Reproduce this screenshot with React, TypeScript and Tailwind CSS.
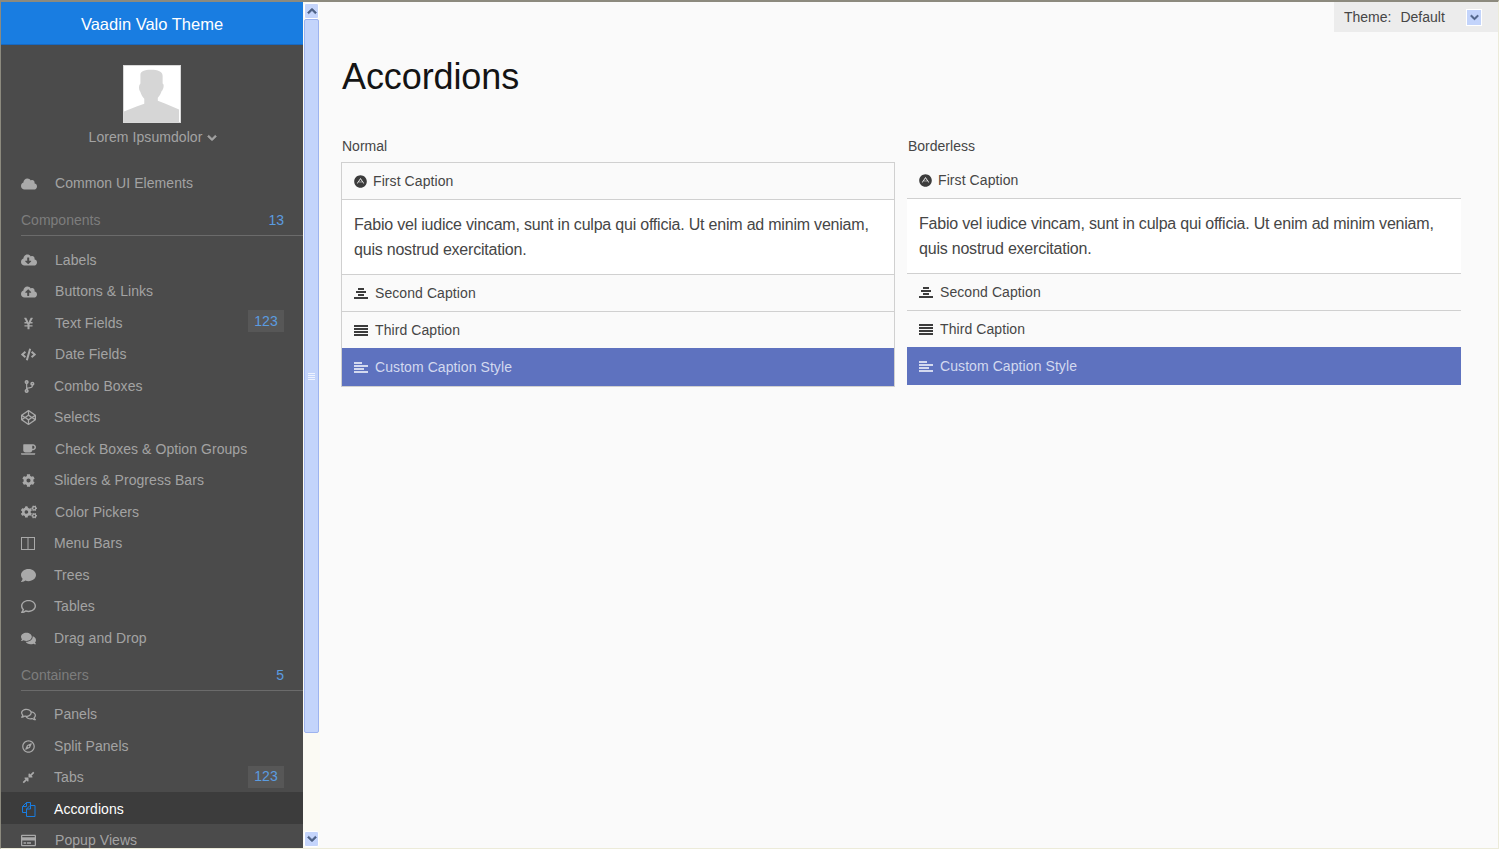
import type { ReactNode } from 'react';
import {
  FaAdn, FaChevronDown, FaChevronUp, FaCloud,
  FaCloudDownloadAlt, FaCloudUploadAlt, FaCode, FaCodeBranch, FaCodepen, FaCoffee, FaCog, FaCogs,
  FaComment, FaComments, FaCompressAlt, FaRegComment, FaRegComments, FaRegCompass,
  FaRegCreditCard, FaYenSign,
} from 'react-icons/fa';

type NavItem = { label: string; icon: ReactNode; iconBox: string; badge?: string; active?: boolean };

const wide = 'w-[34px]';
const narrow = 'w-[33px]';

// fa-columns from the old icon set: plain outline with a centre bar
function ColumnsIcon() {
  return (
    <svg width="14" height="13" viewBox="0 0 14 13" fill="none" stroke="currentColor">
      <rect x="0.5" y="0.5" width="13" height="12" />
      <path d="M7 0.5v12" />
    </svg>
  );
}

// fa-files-o: back sheet top left, front sheet bottom right
function FilesIcon() {
  return (
    <svg width="15" height="16" viewBox="0 0 15 16" fill="none" stroke="currentColor">
      <path d="M9.5 4.5V1.5h-4l-4 4v6h4" />
      <path d="M5.5 1.5v4h-4" />
      <path d="M14 4.5h-5l-3.5 3.5v7.5H14z" />
      <path d="M9.5 4.5V8H5.5" />
    </svg>
  );
}

function BarsIcon({ bars, center }: { bars: number[]; center?: boolean }) {
  return (
    <svg width="14" height="11" viewBox="0 0 14 11" fill="currentColor">
      {bars.map((w, i) => <rect key={i} x={center ? (14 - w) / 2 : 0} y={i * 3} width={w} height="2" />)}
    </svg>
  );
}

const components: NavItem[] = [
  { label: 'Labels', icon: <FaCloudDownloadAlt size={16} />, iconBox: wide },
  { label: 'Buttons & Links', icon: <FaCloudUploadAlt size={16} />, iconBox: wide },
  { label: 'Text Fields', icon: <FaYenSign size={13} className="ml-[1px]" />, iconBox: wide, badge: '-translate-y-[2px]' },
  { label: 'Date Fields', icon: <FaCode size={15} />, iconBox: wide },
  { label: 'Combo Boxes', icon: <FaCodeBranch size={13} className="ml-[2px]" />, iconBox: narrow },
  { label: 'Selects', icon: <FaCodepen size={15} />, iconBox: narrow },
  { label: 'Check Boxes & Option Groups', icon: <FaCoffee size={15} />, iconBox: wide },
  { label: 'Sliders & Progress Bars', icon: <FaCog size={13} className="ml-[1px]" />, iconBox: narrow },
  { label: 'Color Pickers', icon: <FaCogs size={16} />, iconBox: wide },
  { label: 'Menu Bars', icon: <ColumnsIcon />, iconBox: narrow },
  { label: 'Trees', icon: <FaComment size={15} />, iconBox: narrow },
  { label: 'Tables', icon: <FaRegComment size={15} />, iconBox: narrow },
  { label: 'Drag and Drop', icon: <FaComments size={15} />, iconBox: narrow },
];

const containers: NavItem[] = [
  { label: 'Panels', icon: <FaRegComments size={15} />, iconBox: narrow },
  { label: 'Split Panels', icon: <FaRegCompass size={13} className="ml-[1px]" />, iconBox: narrow },
  { label: 'Tabs', icon: <FaCompressAlt size={13} className="ml-[1px]" />, iconBox: narrow, badge: '-translate-y-[1px]' },
  { label: 'Accordions', icon: <FilesIcon />, iconBox: narrow, active: true },
  { label: 'Popup Views', icon: <FaRegCreditCard size={15} />, iconBox: wide },
];

function NavRow({ item }: { item: NavItem }) {
  const shape = item.active
    ? '-mt-[1.5px] mb-[1px] h-[32px] bg-[#3c3c3c] pt-[2.5px] text-white'
    : 'h-[31.5px] text-[#a3a3a3]';
  return (
    <div className={`flex shrink-0 items-center pl-[20px] pr-[19px] text-[14px] tracking-[0.06px] ${shape}`}>
      <span className={`flex shrink-0 items-center ${item.iconBox} ${item.active ? 'text-[#197de1]' : 'text-[#a9a9a9]'}`}>{item.icon}</span>
      <span className="flex-1">{item.label}</span>
      {item.badge && <span className={`flex h-[22px] w-[36px] items-center justify-center bg-[#575757] text-[#5b9ce0] ${item.badge}`}>123</span>}
    </div>
  );
}

function SectionTitle({ label, count, spacing }: { label: string; count: string; spacing: string }) {
  return (
    <div className={`ml-[20px] flex shrink-0 items-end border-b border-[#6b6b6b] pb-[5px] pr-[19px] text-[14px] leading-[20px] ${spacing}`}>
      <span className="flex-1 text-[#7d7d7d]">{label}</span>
      <span className="text-[#5b9ce0]">{count}</span>
    </div>
  );
}

function Sidebar() {
  return (
    <aside className="flex h-full w-[302px] shrink-0 flex-col overflow-hidden bg-[#4b4b4b]">
      <div className="flex h-[43px] shrink-0 items-center justify-center border-b border-[#1769c2] bg-[#197de1] pt-[3px] text-[16.5px] text-white">
        Vaadin Valo Theme
      </div>
      <div className="flex shrink-0 flex-col items-center pt-[20px]">
        <svg width="58" height="58" viewBox="0 0 58 58" className="border border-[#d9d9d9] bg-white">
          <path fill="#d6d6d6" d="M17 9c0-3 4-5 11-5s12 2 12 6v8c2 1 1 6-1 8-1 3-2 5-4 7v3l8 3 14 6v13H0V47l13-5 8-3v-5c-2-2-3-4-4-7-2-3-2-7 0-9z" />
        </svg>
        <div className="mt-[4px] flex h-[20px] items-center gap-[5px] pl-[2px] text-[14px] tracking-[0.06px] text-[#a3a3a3]">
          Lorem Ipsumdolor <FaChevronDown size={10} stroke="currentColor" strokeWidth={40} className="mt-[2px]" />
        </div>
      </div>
      <div className="mt-[21px] flex min-h-0 flex-1 flex-col">
        <NavRow item={{ label: 'Common UI Elements', icon: <FaCloud size={16} />, iconBox: wide }} />
        <SectionTitle label="Components" count="13" spacing="h-[36px] mb-[9px]" />
        {components.map(item => <NavRow key={item.label} item={item} />)}
        <SectionTitle label="Containers" count="5" spacing="h-[37px] mb-[8px]" />
        {containers.map(item => <NavRow key={item.label} item={item} />)}
      </div>
    </aside>
  );
}

function ScrollButton({ children }: { children: ReactNode }) {
  return (
    <div className="flex h-[16px] w-[15px] shrink-0 items-center justify-center rounded-[2px] border border-white bg-[#c5d5fb] text-[#4d6185]">
      {children}
    </div>
  );
}

function Scrollbar() {
  return (
    <div className="flex h-full w-[17px] shrink-0 flex-col items-center bg-[#fbfaf4] py-[1px]">
      <ScrollButton><FaChevronUp size={10} stroke="currentColor" strokeWidth={40} /></ScrollButton>
      <div className="flex h-[714px] w-[15px] shrink-0 items-center justify-center rounded-[2px] border border-[#9db3ef] bg-[#c3d4fb]">
        <div className="flex w-[7px] flex-col gap-[1px]">
          <div className="h-px bg-[#eef3ff]" /><div className="h-px bg-[#eef3ff]" /><div className="h-px bg-[#eef3ff]" /><div className="h-px bg-[#eef3ff]" />
        </div>
      </div>
      <div className="flex-1" />
      <ScrollButton><FaChevronDown size={10} stroke="currentColor" strokeWidth={40} /></ScrollButton>
    </div>
  );
}

function Caption({ icon, label, variant, iconBox }: { icon: ReactNode; label: string; variant: 'ruled' | 'flat' | 'custom'; iconBox: string }) {
  const look = {
    ruled: 'h-[37px] border-b border-[#d0d0d0] text-[#464646]',
    flat: 'h-[36px] text-[#464646]',
    custom: 'h-[38px] bg-[#5e72bf] text-[#d3d9ef]',
  }[variant];
  return (
    <div className={`flex items-center pl-[12px] text-[14px] tracking-[0.08px] ${look}`}>
      <span className={`flex shrink-0 items-center ${iconBox} ${variant === 'custom' ? 'text-[#d3d9ef]' : 'text-[#3c3c3c]'}`}>{icon}</span>
      {label}
    </div>
  );
}

function AccordionDemo({ bordered }: { bordered: boolean }) {
  return (
    <div className={bordered ? 'border border-[#d0d0d0]' : ''}>
      <Caption icon={<FaAdn size={13} />} label="First Caption" iconBox="w-[19px]" variant="ruled" />
      <div className="h-[75px] border-b border-[#d0d0d0] bg-white px-[12px] pt-[12px] text-[16px] leading-[25px] tracking-[-0.21px] text-[#464646]">
        Fabio vel iudice vincam, sunt in culpa qui officia. Ut enim ad minim veniam, quis nostrud exercitation.
      </div>
      <Caption icon={<BarsIcon bars={[6, 10, 6, 14]} center />} label="Second Caption" iconBox="w-[21px]" variant="ruled" />
      <Caption icon={<BarsIcon bars={[14, 14, 14, 14]} />} label="Third Caption" iconBox="w-[21px]" variant="flat" />
      <Caption icon={<BarsIcon bars={[8, 14, 10, 14]} />} label="Custom Caption Style" iconBox="w-[21px]" variant="custom" />
    </div>
  );
}

export default function App() {
  return (
    <div className="flex h-[849px] w-[1499px] border-l border-t-2 border-r border-b border-l-[#8c8a7e] border-t-[#8c8a7e] border-r-[#ecebd9] border-b-[#ecebd9] font-['Liberation_Sans',Arial,sans-serif]">
      <Sidebar />
      <Scrollbar />
      <main className="relative flex-1 overflow-hidden bg-[#fafafa] pl-[21px] pr-[37px] pt-[53px] text-[#464646]">
        <div className="absolute right-0 top-0 flex h-[30px] w-[164px] items-center bg-[#ececec] pl-[10px] text-[14px]">
          <span>Theme:</span>
          <span className="ml-[9px]">Default</span>
          <span className="ml-auto mr-[16px] flex h-[17px] w-[16px] items-center justify-center border border-white bg-[#c3d4fb] text-[#4d6185]">
            <FaChevronDown size={9} stroke="currentColor" strokeWidth={40} />
          </span>
        </div>
        <h1 className="ml-[1px] h-[44px] text-[36px] leading-[44px] tracking-[-0.1px] text-[#141414]">Accordions</h1>
        <div className="mt-[37px] grid grid-cols-[554px_554px] gap-x-[12px]">
          <div>
            <div className="mb-[6px] ml-[1px] h-[20px] text-[14px] leading-[20px]">Normal</div>
            <AccordionDemo bordered />
          </div>
          <div>
            <div className="mb-[6px] ml-[1px] h-[20px] text-[14px] leading-[20px]">Borderless</div>
            <AccordionDemo bordered={false} />
          </div>
        </div>
      </main>
    </div>
  );
}
